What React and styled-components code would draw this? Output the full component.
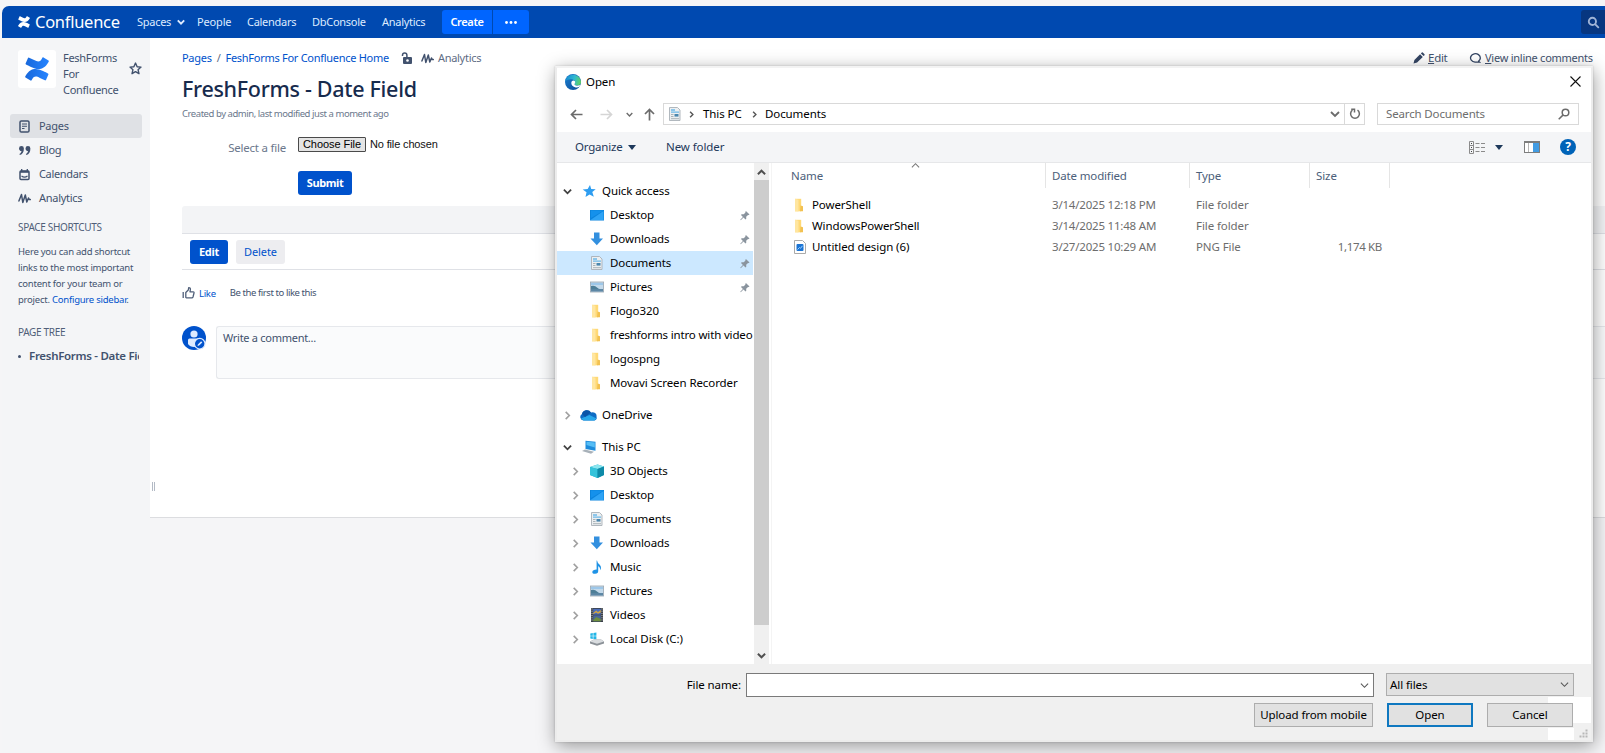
import React from "react";
import styled, { createGlobalStyle, css } from "styled-components";

const Global = createGlobalStyle`
  *, *::before, *::after { box-sizing: border-box; }
  html, body { margin: 0; padding: 0; background: #f5f5f5; overflow: hidden; }
  body { font-family: "Noto Sans", "Open Sans", sans-serif; font-size: 11px; letter-spacing: -0.28px; color: #42526e; }
  svg { display: block; flex: none; }
`;

/* ---------- shared ---------- */
const Text = styled.span`
  white-space: nowrap;
  flex: none;
  padding-bottom: ${(p) => (p.$flat ? 0 : 2)}px;
  ${(p) => p.$size && css`font-size: ${p.$size}px;`}
  ${(p) => p.$track !== undefined && css`letter-spacing: ${p.$track}px;`}
  font-weight: ${(p) => p.$weight || 400};
  ${(p) => p.$color && css`color: ${p.$color};`}
`;

const Page = styled.div`
  position: relative;
  width: 1605px;
  height: 753px;
  overflow: hidden;
  padding: 6px 0 0 2px;
  display: flex;
  flex-direction: column;
  background: #f5f5f7;
`;

/* ---------- header ---------- */
const Header = styled.header`
  height: 32px;
  flex: none;
  display: flex;
  align-items: center;
  padding-left: 16px;
  background: #0049b0;
  border-top-left-radius: 7px;
  color: #deebff;
`;
const Brand = styled.div`
  width: 119px;
  display: flex;
  align-items: center;
  gap: 5px;
  color: #fff;
`;
const NavItem = styled.a`
  width: ${(p) => p.$w}px;
  display: flex;
  align-items: center;
  gap: 6px;
`;
const CreateGroup = styled.div`
  display: flex;
  gap: 1px;
  height: 24px;
`;
const CreateButton = styled.button`
  border: 0;
  padding: 0;
  width: ${(p) => p.$w}px;
  display: flex;
  align-items: center;
  justify-content: center;
  background: #0065ff;
  color: #fff;
  font-family: inherit;
  border-radius: ${(p) => (p.$end ? "0 3px 3px 0" : "3px 0 0 3px")};
`;
const QuickSearch = styled.div`
  margin-left: auto;
  width: 24px;
  height: 24px;
  border-radius: 3px 0 0 3px;
  background: #073680;
  display: flex;
  align-items: center;
  padding-left: 6px;
`;

/* ---------- sidebar ---------- */
const Columns = styled.div`
  display: flex;
  flex: 1;
`;
const Sidebar = styled.aside`
  width: 148px;
  flex: none;
  background: #f4f5f7;
  padding: 12px 8px 0 8px;
`;
const SpaceHead = styled.div`
  height: 64px;
  display: flex;
  padding-left: 8px;
`;
const SpaceLogo = styled.div`
  width: 38px;
  height: 38px;
  flex: none;
  background: #fff;
  border-radius: 3px;
  display: grid;
  place-items: center;
`;
const SpaceName = styled.div`
  width: 73px;
  flex: none;
  padding-left: 7px;
  line-height: 16px;
`;
const StarSlot = styled.div`
  padding-top: 12px;
`;
const SideLink = styled.a`
  height: 24px;
  width: 132px;
  display: flex;
  align-items: center;
  padding-left: 8px;
  gap: 8px;
  border-radius: 3px;
  background: ${(p) => (p.$active ? "#dfe1e5" : "transparent")};
`;
const SideTitle = styled.h2`
  margin: ${(p) => p.$top}px 0 0 8px;
  height: 16px;
  line-height: 16px;
  font-weight: 400;
  color: #505f79;
  font-size: 10px;
`;
const SideHelp = styled.p`
  margin: 9px 0 0 8px;
  line-height: 16px;
  font-size: 9.5px;
  letter-spacing: -0.24px;
  a { color: #0052cc; }
`;
const TreeEntry = styled.div`
  margin: 8px 0 0 8px;
  width: 121px;
  height: 16px;
  overflow: hidden;
  display: flex;
  align-items: center;
  gap: 8px;
  &::before {
    content: "";
    width: 3px;
    height: 3px;
    border-radius: 50%;
    background: #42526e;
    flex: none;
  }
`;

/* ---------- content ---------- */
const Content = styled.main`
  flex: 1;
  height: 480px;
  background: #fff;
  border-bottom: 1px solid #dcdde0;
  display: flex;
`;
const Splitter = styled.div`
  width: 32px;
  padding: 444px 0 0 2px;
  display: flex;
  gap: 1px;
  &::before, &::after {
    content: "";
    width: 1px;
    height: 9px;
    background: #b3bac5;
  }
`;
const Article = styled.article`
  flex: 1;
  padding-top: 12px;
`;
const CrumbBar = styled.div`
  height: 16px;
  display: flex;
  align-items: center;
`;
const Crumbs = styled.nav`
  width: 1231px;
  display: flex;
  align-items: center;
  gap: 5px;
  color: #5e6c84;
  a { color: #0052cc; }
`;
const CrumbTools = styled.span`
  display: flex;
  align-items: center;
  gap: 4px;
  margin-left: ${(p) => p.$ml}px;
`;
const Action = styled.a`
  display: flex;
  align-items: center;
  gap: ${(p) => p.$gap || 3}px;
  width: ${(p) => p.$w}px;
  u { text-underline-offset: 1px; }
`;
const Title = styled.h1`
  margin: 6px 0 0;
  height: 32px;
  line-height: 32px;
  font-weight: 500;
  color: #172b4d;
`;
const Byline = styled.div`
  height: 16px;
  line-height: 16px;
  margin-top: 1px;
  color: #6b778c;
`;
const FieldRow = styled.div`
  display: flex;
  height: 16px;
  margin-top: 15px;
`;
const FieldLabel = styled.label`
  width: 116px;
  padding: 4px 12px 0 0;
  text-align: right;
  color: #6b778c;
`;
const FilePicker = styled.div`
  display: flex;
  align-items: center;
  gap: 4px;
  font-family: "Liberation Sans", Arial, sans-serif;
  color: #111;
`;
const ChooseFile = styled.button`
  width: 68px;
  height: 15px;
  padding: 0;
  line-height: 12px;
  font-family: inherit;
  background: #e4e4e4;
  border: 1px solid #4a4a4a;
  border-radius: 1px;
  color: #000;
`;
const Button = styled.button`
  height: 24px;
  width: ${(p) => p.$w}px;
  padding: 0;
  border: 0;
  border-radius: 3px;
  font: inherit;
  letter-spacing: inherit;
  display: flex;
  align-items: center;
  justify-content: center;
  ${(p) =>
    p.$primary
      ? css`background: #0052cc; color: #fff;`
      : css`background: #ededf0; color: #0052cc;`}
`;
const SubmitRow = styled.div`
  padding: 19px 0 11px 116px;
  display: flex;
`;
const Band = styled.div`
  height: 28px;
  background: #f3f4f6;
  border-bottom: 1px solid #dfe1e6;
  border-radius: 3px 0 0 0;
`;
const ButtonRow = styled.div`
  height: 36px;
  padding: 6px 8px 0;
  display: flex;
  gap: 8px;
  border-bottom: 1px solid #dfe1e6;
`;
const LikeRow = styled.div`
  margin-top: 14px;
  height: 17px;
  padding-top: 1px;
  display: flex;
  align-items: center;
  gap: 4px;
`;
const LikeCount = styled.span`
  padding-left: 10px;
  display: flex;
`;
const CommentRow = styled.div`
  margin-top: 25px;
  display: flex;
  gap: 10px;
`;
const CommentBox = styled.div`
  flex: 1;
  height: 53px;
  border: 1px solid #e6e8ec;
  border-right: 0;
  border-radius: 3px 0 0 3px;
  background: #fafbfc;
  padding: 3px 6px;
`;

/* ---------- file dialog ---------- */
const Dialog = styled.section`
  position: absolute;
  left: 555px;
  top: 66px;
  width: 1038px;
  height: 676px;
  border: 2px solid #ececec;
  border-top-color: #f3f3f3;
  background: #fff;
  box-shadow: 0 0 2px rgba(0, 0, 0, 0.18), 1px 4px 17px rgba(0, 0, 0, 0.38);
  color: #000;
  font-size: 11.5px;
  letter-spacing: -0.09px;
  display: flex;
  flex-direction: column;
`;
const TitleBar = styled.div`
  height: 29px;
  display: flex;
  align-items: center;
  padding: 0 10px 2px 8px;
  gap: 5px;
  flex: none;
  svg:last-child { margin-left: auto; }
`;
const NavBar = styled.div`
  height: 35px;
  flex: none;
  display: flex;
  padding: 6px 12px 0 13px;
`;
const NavArrows = styled.div`
  width: 93px;
  height: 22px;
  display: flex;
  align-items: center;
`;
const ArrowSlot = styled.span`
  width: ${(p) => p.$w}px;
`;
const AddressBar = styled.div`
  width: 702px;
  height: 22px;
  border: 1px solid #d9d9d9;
  display: flex;
  align-items: center;
  padding-left: 4px;
`;
const Crumb = styled.span`
  display: flex;
  align-items: center;
  width: ${(p) => p.$w}px;
`;
const Refresh = styled.span`
  width: 20px;
  height: 20px;
  border-left: 1px solid #d9d9d9;
  display: grid;
  place-items: center;
`;
const DropSlot = styled.span`
  margin-left: auto;
  padding-right: 4px;
`;
const SearchBox = styled.div`
  margin-left: 12px;
  width: 202px;
  height: 22px;
  border: 1px solid #d9d9d9;
  display: flex;
  align-items: center;
  justify-content: space-between;
  padding: 0 8px;
  color: #6d6d6d;
`;
const ToolBar = styled.div`
  height: 31px;
  flex: none;
  background: #f4f5f7;
  border-bottom: 1px solid #e6e7e9;
  color: #1e395b;
  display: flex;
  align-items: center;
  padding: 0 15px 0 18px;
`;
const ToolItem = styled.div`
  width: ${(p) => p.$w}px;
  display: flex;
  align-items: center;
  gap: 5px;
`;
const ToolIcons = styled.div`
  margin-left: auto;
  display: flex;
  align-items: center;
`;
const IconGap = styled.span`
  width: ${(p) => p.$w}px;
`;
const Body = styled.div`
  height: 501px;
  flex: none;
  display: flex;
`;
const Tree = styled.div`
  width: 197px;
  flex: none;
  padding-top: 16px;
  overflow: hidden;
`;
const TreeRow = styled.div`
  height: 24px;
  width: 196px;
  margin-top: ${(p) => p.$gap || 0}px;
  padding-left: ${(p) => (p.$child ? 14 : 6)}px;
  display: flex;
  align-items: center;
  overflow: hidden;
  background: ${(p) => (p.$selected ? "#cce8ff" : "transparent")};
`;
const ChevSlot = styled.span`
  width: ${(p) => (p.$child ? 19 : 17)}px;
  flex: none;
`;
const IconSlot = styled.span`
  width: ${(p) => (p.$child ? 20 : 22)}px;
  padding-bottom: 1px;
  flex: none;
`;
const PinSlot = styled.span`
  margin-left: auto;
  padding-right: 3px;
`;
const ScrollBar = styled.div`
  width: 15px;
  height: 501px;
  background: #f0f0f0;
  display: flex;
  flex-direction: column;
  align-items: center;
  padding: 5px 0 4px;
`;
const Thumb = styled.div`
  width: 15px;
  height: 445px;
  background: #cdcdcd;
  margin: 3px 0 auto;
`;
const List = styled.div`
  flex: 1;
  margin-left: 2px;
  border-left: 1px solid #f4f4f4;
  padding-left: 13px;
`;
const HeadRow = styled.div`
  display: flex;
  height: 25px;
  margin-bottom: 7px;
  color: #4c607a;
`;
const HeadCell = styled.div`
  width: ${(p) => p.$w}px;
  padding: 4px 0 0 6px;
  line-height: 17px;
  border-right: 1px solid #e5e5e5;
  display: flex;
`;
const SortMark = styled.span`
  margin: -6px auto 0 88px;
`;
const FileRow = styled.div`
  height: 21px;
  display: flex;
  align-items: center;
  color: #6d6d6d;
  svg { margin-bottom: 1px; }
`;
const Cell = styled.div`
  width: ${(p) => p.$w}px;
  padding-left: ${(p) => p.$pl || 6}px;
  padding-right: ${(p) => (p.$right ? 8 : 0)}px;
  display: flex;
  align-items: center;
  justify-content: ${(p) => (p.$right ? "flex-end" : "flex-start")};
  gap: 5px;
`;
const Footer = styled.div`
  flex: 1;
  background: #f0f0f0;
  padding-top: 9px;
  display: flex;
  flex-direction: column;
`;
const FooterRow = styled.div`
  display: flex;
  flex: none;
  align-items: center;
  justify-content: flex-end;
  padding-right: ${(p) => p.$right}px;
  height: ${(p) => p.$h}px;
`;
const NameLabel = styled.label`
  display: flex;
  margin-right: 5px;
`;
const Combo = styled.div`
  width: ${(p) => p.$w}px;
  height: ${(p) => p.$h}px;
  border: 1px solid ${(p) => (p.$grey ? "#adadad" : "#7a7a7a")};
  background: ${(p) => (p.$grey ? "#e1e1e1" : "#fff")};
  display: flex;
  align-items: center;
  justify-content: space-between;
  padding: 0 4px 0 3px;
  align-self: flex-start;
`;
const WinButton = styled.button`
  width: ${(p) => p.$w}px;
  height: 24px;
  flex: none;
  margin-left: ${(p) => p.$ml || 0}px;
  padding: 0;
  display: flex;
  align-items: center;
  justify-content: center;
  background: #e1e1e1;
  border: ${(p) => (p.$default ? "2px solid #0f78c0" : "1px solid #adadad")};
  font: inherit;
  letter-spacing: inherit;
  color: #000;
`;
const ButtonBand = styled.div`
  flex: none;
  height: 26px;
  display: flex;
  justify-content: flex-end;
  align-items: flex-start;
  padding: 6px 18px 0 0;
  background: linear-gradient(#fff, #fff) right / 43px 100% no-repeat;
`;
const GripBand = styled.div`
  flex: 1;
  display: flex;
  justify-content: flex-end;
  align-items: flex-end;
  padding: 0 3px 2px 0;
  background: linear-gradient(#fff, #fff) right 17px bottom / 26px 12px no-repeat;
`;

/* ---------- icons ---------- */
const Chevron = ({ dir = "down", size = 9, color = "#444", w = 1.6 }) => {
  const d = {
    down: "M1 3l4 4 4-4",
    up: "M1 7l4-4 4 4",
    right: "M3 1l4 4-4 4",
  }[dir];
  return (
    <svg width={size} height={size} viewBox="0 0 10 10" fill="none" stroke={color} strokeWidth={w}>
      <path d={d} />
    </svg>
  );
};
const Triangle = () => (
  <svg width="8" height="5" viewBox="0 0 8 5"><path d="M0 0h8L4 5z" fill="#1e395b" /></svg>
);
const ConfluenceMark = ({ size, a = "#fff", b = "#fff" }) => (
  <svg width={size} height={size} viewBox="0 0 24 24">
    <defs>
      <linearGradient id={"cf" + size} x1="0" x2="1">
        <stop offset="0" stopColor={a} /><stop offset="1" stopColor={b} />
      </linearGradient>
    </defs>
    <g fill={`url(#cf${size})`}>
      <path d="M.9 18.3c-.3.4-.5.9-.7 1.2-.2.4-.1.8.3 1l5 3.1c.4.2.9.1 1.100-.3.2-.3.4-.8.7-1.200 2-3.300 4-2.900 7.600-1.200l5 2.400c.4.2.9 0 1.100-.4l2.400-5.400c.2-.4 0-.9-.4-1.100-1-.5-3.100-1.500-5-2.400C11.200 10.700 5.400 10.900.9 18.300z" />
      <path d="M23.100 5.700c.3-.4.5-.9.7-1.200.2-.4.1-.8-.3-1l-5-3.100c-.4-.2-.9-.1-1.100.3-.2.3-.4.8-.7 1.200-2 3.300-4 2.900-7.600 1.200L4.100.700c-.4-.2-.9 0-1.100.4L.6 6.500c-.2.4 0 .9.4 1.100 1 .5 3.100 1.500 5 2.400 6.800 3.300 12.600 3.100 17.100-4.300z" />
    </g>
  </svg>
);
const Wave = ({ color = "#42526e", size = 13 }) => (
  <svg width={size} height={size} viewBox="0 0 13 13" fill="none" stroke={color} strokeWidth="1.5" strokeLinejoin="round" strokeLinecap="round">
    <path d="M.9 9L3.500 2.500l1.300 8L7.300 3l1.500 7 1.700-4 .8 1.600h1" />
  </svg>
);
const PagesIcon = () => (
  <svg width="13" height="13" viewBox="0 0 13 13" fill="none" stroke="#42526e">
    <rect x="2" y="1" width="9" height="11" rx="1.300" strokeWidth="1.500" />
    <path d="M4 4h5M4 6.300h5M4 8.500h2.500" strokeWidth="1.100" />
  </svg>
);
const QuoteIcon = () => (
  <svg width="13" height="13" viewBox="0 0 13 13" fill="#42526e">
    <path d="M1 4.500a2.400 2.400 0 1 1 4.900 0C5.900 8 4.500 10.300 1.900 11l-.5-1c1.200-.6 1.900-1.500 2.100-2.900C2 7.100 1 5.900 1 4.500zM7.500 4.500a2.400 2.400 0 1 1 4.900 0c0 3.500-1.400 5.800-4 6.500l-.5-1c1.200-.6 1.900-1.500 2.100-2.900-1.500 0-2.500-1.200-2.500-2.600z" />
  </svg>
);
const CalIcon = () => (
  <svg width="13" height="13" viewBox="0 0 13 13" fill="none" stroke="#42526e">
    <rect x="2" y="3" width="9" height="8.500" rx="1" strokeWidth="1.500" />
    <path d="M2 3.800h9" strokeWidth="2" /><path d="M3.700 1v2M9.300 1v2" strokeWidth="1.300" /><path d="M3.500 8q3 2.400 6 0" strokeWidth="1.200" />
  </svg>
);
const StarIcon = () => (
  <svg width="13" height="13" viewBox="0 0 24 24" fill="none" stroke="#42526e" strokeWidth="2.600" strokeLinejoin="round">
    <path d="M12 2l3 6.700 7.200.7-5.500 4.800 1.700 7.300L12 17.700l-6.400 3.800 1.700-7.300L1.800 9.400 9 8.700z" />
  </svg>
);
const LockIcon = () => (
  <svg width="12" height="13" viewBox="0 0 12 13">
    <path d="M1.500 4V3.200a2.200 2.200 0 0 1 4.400 0V6" fill="none" stroke="#42526e" strokeWidth="1.500" />
    <rect x="2" y="5" width="9" height="7" rx="1" fill="#42526e" /><circle cx="6.500" cy="8.500" r="1.300" fill="#fff" />
  </svg>
);
const PencilIcon = () => (
  <svg width="12" height="12" viewBox="0 0 12 12" fill="#344563">
    <path d="M.5 11.500l.9-3.600 5.700-5.700 2.700 2.700-5.700 5.700zM7.900 1.400l.9-.9q.5-.4 1 0l1.700 1.700q.4.500 0 1l-.9.900z" />
  </svg>
);
const BubbleIcon = () => (
  <svg width="12" height="13" viewBox="0 0 13 13" fill="none" stroke="#344563" strokeWidth="1.400">
    <path d="M10 9.700A5.300 4.600 0 1 0 6.500 10.500H11.500L10 9.200" />
  </svg>
);
const SearchIcon = () => (
  <svg width="13" height="13" viewBox="0 0 13 13" fill="none" stroke="#9fb3d6" strokeWidth="1.900" strokeLinecap="round">
    <circle cx="5.400" cy="5.400" r="3.600" /><path d="M8.300 8.300l3 3" />
  </svg>
);
const ThumbIcon = () => (
  <svg width="13" height="13" viewBox="0 0 13 13" fill="none" stroke="#505f79" strokeWidth="1.300" strokeLinejoin="round">
    <path d="M1.200 5v6M3.800 10.500V5.500l2.500-2.500.4-2.300q1.700-.2 1.700 1.600L8 4.800h3.200q1 .2.800 1.200l-1 4q-.3.900-1.200.9H4.600z" />
  </svg>
);
const Avatar = () => (
  <svg width="24" height="24" viewBox="0 0 24 24">
    <circle cx="12" cy="12" r="12" fill="#0052cc" />
    <circle cx="12" cy="8" r="3.600" fill="#deebff" />
    <path d="M6 14q0-1.500 1.500-1.500h9q1.500 0 1.500 1.500v4q-2 3-6 3t-6-3z" fill="#deebff" />
    <circle cx="17.700" cy="17.700" r="5.300" fill="#0052cc" stroke="#deebff" strokeWidth="1.200" />
    <path d="M15.500 20l.4-1.600 3.200-3.200 1.200 1.200-3.200 3.200z" fill="#deebff" />
  </svg>
);
const EdgeIcon = () => (
  <svg width="16" height="16" viewBox="0 0 16 16">
    <defs>
      <linearGradient id="edTop" x1="0" y1=".3" x2="1" y2=".5"><stop offset="0" stopColor="#1787cf" /><stop offset=".55" stopColor="#2fb8d2" /><stop offset="1" stopColor="#5fd364" /></linearGradient>
      <linearGradient id="edLow" x1="0" y1="0" x2="1" y2="1"><stop offset="0" stopColor="#1b7fd0" /><stop offset="1" stopColor="#0c4a96" /></linearGradient>
    </defs>
    <circle cx="8" cy="8" r="8" fill="url(#edLow)" />
    <path d="M.1 7.600A8 8 0 0 1 16 8c0 2.200-1.600 3.400-3.600 3.400-1.800 0-2.900-.7-2.900-1.200s.7-.7.700-1.900C10.200 6.500 8.500 5.200 6 5.200 3 5.200.6 6.600.1 7.600z" fill="url(#edTop)" />
    <path d="M6.300 8.800C6.500 7.400 7.400 6.600 8.400 6.600c1 0 1.800.8 1.800 1.700 0 1.200-.7 1.300-.7 1.900 0 .7 1.300 1.600 3.500 1.400 1 0 1.700-.2 2.300-.5q-.6 1.400-1.400 2-1.400.6-3.200.3C8 12.800 6 11 6.300 8.800z" fill="#fff" />
  </svg>
);
const CloseIcon = () => (
  <svg width="11" height="11" viewBox="0 0 11 11" stroke="#111" strokeWidth="1.100"><path d="M.5.5l10 10M10.500.5l-10 10" /></svg>
);
const Arrow = ({ dir, color }) => (
  <svg width="13" height="13" viewBox="0 0 13 13" fill="none" stroke={color} strokeWidth="1.700">
    <path d={{ left: "M12.500 6.500H1.500M6 2L1.500 6.500 6 11", right: "M.5 6.500h11M7 2l4.500 4.500L7 11", up: "M6.500 12.500V1.500M2 6l4.500-4.500L11 6" }[dir]} />
  </svg>
);
const RefreshIcon = () => (
  <svg width="12" height="12" viewBox="0 0 12 12" fill="none" stroke="#6b6b6b" strokeWidth="1.500">
    <path d="M8.500 2.200A4.400 4.400 0 1 1 3.500 2.200" /><path d="M2.200 1.200h3.300v3.300" />
  </svg>
);
const WinSearch = () => (
  <svg width="12" height="12" viewBox="0 0 12 12" fill="none" stroke="#6b6b6b" strokeWidth="1.500">
    <circle cx="7.500" cy="4.500" r="3.300" /><path d="M5.200 6.900L.7 11.300" />
  </svg>
);
const ViewIcon = () => (
  <svg width="16" height="13" viewBox="0 0 16 13" fill="none" stroke="#8b8b8b">
    <path d="M.5.500h4v12h-4zM.5 4.500h4M.5 8.500h4" />
    <path d="M6.500 2.500h4M12 2.500h4M6.500 6.500h4M12 6.500h4M6.500 10.500h4M12 10.500h4" />
    <path d="M2 2.500h1M2 6.500h1M2 10.500h1" stroke="#444" />
  </svg>
);
const PreviewIcon = () => (
  <svg width="16" height="12" viewBox="0 0 16 12">
    <rect x=".5" y=".5" width="15" height="11" fill="#fff" stroke="#7d7d7d" />
    <path d="M0 1h16" stroke="#7d7d7d" strokeWidth="2" />
    <path d="M4.500 2v9" stroke="#b5b5b5" /><rect x="9" y="2" width="6" height="9" fill="#429ce3" />
  </svg>
);
const HelpBadge = styled.span`
  width: 16px;
  height: 16px;
  border-radius: 50%;
  background: #0063b8;
  color: #fff;
  font-size: 12px;
  font-weight: 700;
  line-height: 16px;
  text-align: center;
`;
const PinIcon = () => (
  <svg width="10" height="11" viewBox="0 0 11 11" fill="#8a949e">
    <path d="M6.500.500L10.500 4.500 9.500 5l-1 .200-1.700 1.700.1 2.300-.9.700L3.900 7.800.800 10.700.300 10.200 3.200 7.100 1.100 5l.700-.9 2.300.1L5.800 2.500 6 1.500z" />
  </svg>
);
const Icon = ({ name }) => {
  const s = { width: 14, height: 14, viewBox: "0 0 14 14" };
  switch (name) {
    case "star":
      return <svg width="16" height="14" viewBox="-3 0 16 14"><path d="M7 1l1.200 4 4.500.2-3.400 2.900 1.500 4.700L6.600 10.400 2.500 13l1-4.700L-.3 5.500l5-.4z" fill="#2e9df0" /></svg>;
    case "desktop":
      return <svg {...s}><rect y="2" width="14" height="10.500" fill="#0b84dd" /><path d="M.5 12L13.500 3v9z" fill="#2ea3f5" /><path d="M1 2.500h12.500L1 10z" fill="#1491ec" /></svg>;
    case "down":
      return <svg {...s}><path d="M4 .5h5.500v6H13L6.800 13.300.500 6.500H4z" fill="#3390df" /></svg>;
    case "doc":
      return <svg {...s}><path d="M1.500.5h8l2.500 2.500v10.500h-10.500z" fill="#eceff1" stroke="#a9b0b7" strokeWidth=".9" /><path d="M3 3h4M3 5.200h8" stroke="#6db9e8" strokeWidth="1.300" /><rect x="6.500" y="7" width="4" height="2.600" fill="#4a86ad" /><path d="M3 7.500h2.500M3 9.500h2.500M3 11.700h8" stroke="#a3abb1" strokeWidth=".9" /></svg>;
    case "pic":
      return <svg {...s}><rect x=".4" y="2" width="13.200" height="10" fill="#c3d9ea" stroke="#9aa6b0" strokeWidth=".8" /><path d="M1 6q4-1 6 1.500t6 1.500v1H1z" fill="#4d7e97" /><path d="M1 9.200h12v2.300H1z" fill="#5d87a5" /><path d="M1 3h12v2H1z" fill="#8dbfe8" opacity=".7" /></svg>;
    case "folder":
      return <svg {...s}><path d="M2 .8h6.200v12.500H2z" fill="#ffd976" /><path d="M2 .8l3.500 1v11.700L2 13.200z" fill="#ffe6a0" /><path d="M7.500 7.500l2.500.7v5H7z" fill="#f2c151" /></svg>;
    case "cloud":
      return <svg width="17" height="12" viewBox="0 0 17 12"><path d="M3.500 11.500A3.500 3.500 0 0 1 2 5a5 5 0 0 1 9-1.500A4 4 0 0 1 16.500 8a2.500 2.500 0 0 1-2 3.500z" fill="#0f6cc4" /><path d="M3.500 11.500L1 9.500 9.500 6l7 3.500-2 2z" fill="#29a8ea" /><path d="M2 5a5 5 0 0 1 9-1.500L5 8z" fill="#0a55a8" /></svg>;
    case "pc":
      return <svg width="17" height="14" viewBox="-1.500 0 17 14"><path d="M4 .800l10 1v9l-10-1.800z" fill="#1d8bdb" /><path d="M5 1.700l8.300.8v5l-8.300-2.500z" fill="#55bdf5" /><path d="M.5 11l3-1.500 9 2.200-3 2z" fill="#a8b1b9" /></svg>;
    case "cube":
      return <svg {...s}><path d="M0 3l7.500-2.500L14 2.500v8.500l-6.500 3L0 11z" fill="#1ba9c4" /><path d="M0 3l7.500-2.500L14 2.500 7.500 5z" fill="#8ce6f0" /><path d="M0 3L7.500 5v9L0 11z" fill="#35c3da" /><path d="M7.500 5L14 2.500v8.500l-6.500 3z" fill="#0e8aa8" /></svg>;
    case "music":
      return <svg {...s}><path d="M7 .5q.5 2.800 2.700 4.200Q12 6.800 10.200 10.300 10.500 7.300 8.200 6v5q0 2.600-3 2.800-3 0-2.900-1.900Q2.800 9.700 6.600 9.600V.5z" fill="#1f93e6" /></svg>;
    case "video":
      return <svg {...s}><rect x="1" width="12" height="14" fill="#3a3f46" /><rect x="3.200" y=".8" width="7.600" height="5.800" fill="#4b6dbb" /><rect x="3.200" y="7.300" width="7.600" height="6" fill="#49669a" /><path d="M3.200 5l3-2.500L8 4l2.800-2v2.600L8 5.800 6 4.600 3.200 6.200z" fill="#d2a53f" /><path d="M3.200 12l3-3 4.600 2v2.300H3.200z" fill="#6f8f3f" /><path d="M2 .5v13M12 .5v13" stroke="#c9ccd0" strokeDasharray="1 1.200" /></svg>;
    case "disk":
      return <svg {...s}><path d="M.3 1.500l2.500-.4v2.600H.3zM3.400 1l3-.5v3.200h-3zM.3 4.300h2.500v2.600l-2.500-.4zM3.400 4.300h3v3.200l-3-.5z" fill="#22b5e6" /><path d="M0 9.500l4-2h7l3 2v2l-7 2.300L0 11.500z" fill="#8c9298" /><path d="M0 9.500l4-2h7l3 2-7 2.200z" fill="#d9dcdf" /></svg>;
    default:
      return <svg {...s}><path d="M1.500.500h8L12.500 3.500v10h-11z" fill="#fff" stroke="#a0a0a0" strokeWidth=".9" /><rect x="3.500" y="4" width="7" height="7" rx="1" fill="#1b74d4" /><path d="M4.500 9.500l2-2 1 .8 2-2.500" stroke="#9fd3ff" fill="none" /></svg>;
  }
};
const Grip = () => (
  <svg width="9" height="9" viewBox="0 0 9 9" fill="#b8b8b8">
    <path d="M6.500.500h2v2h-2zM6.500 3.500h2v2h-2zM6.500 6.500h2v2h-2zM3.500 3.500h2v2h-2zM3.500 6.500h2v2h-2zM.5 6.500h2v2h-2z" />
  </svg>
);

/* ---------- data ---------- */
const tree = [
  { t: "Quick access", i: "star", open: true },
  { t: "Desktop", i: "desktop", child: true, pin: true },
  { t: "Downloads", i: "down", child: true, pin: true },
  { t: "Documents", i: "doc", child: true, pin: true, sel: true },
  { t: "Pictures", i: "pic", child: true, pin: true },
  { t: "Flogo320", i: "folder", child: true },
  { t: "freshforms intro with video", i: "folder", child: true, track: -0.16 },
  { t: "logospng", i: "folder", child: true },
  { t: "Movavi Screen Recorder", i: "folder", child: true },
  { t: "OneDrive", i: "cloud", gap: 8, closed: true },
  { t: "This PC", i: "pc", gap: 8, open: true },
  { t: "3D Objects", i: "cube", child: true, closed: true },
  { t: "Desktop", i: "desktop", child: true, closed: true },
  { t: "Documents", i: "doc", child: true, closed: true },
  { t: "Downloads", i: "down", child: true, closed: true },
  { t: "Music", i: "music", child: true, closed: true },
  { t: "Pictures", i: "pic", child: true, closed: true },
  { t: "Videos", i: "video", child: true, closed: true },
  { t: "Local Disk (C:)", i: "disk", child: true, closed: true },
];
const files = [
  { n: "PowerShell", i: "folder", d: "3/14/2025 12:18 PM", k: "File folder", s: "" },
  { n: "WindowsPowerShell", i: "folder", d: "3/14/2025 11:48 AM", k: "File folder", s: "" },
  { n: "Untitled design (6)", i: "png", d: "3/27/2025 10:29 AM", k: "PNG File", s: "1,174 KB" },
];

function OpenDialog() {
  return (
    <Dialog>
      <TitleBar>
        <EdgeIcon />
        <Text $flat>Open</Text>
        <CloseIcon />
      </TitleBar>
      <NavBar>
        <NavArrows>
          <ArrowSlot $w={30}><Arrow dir="left" color="#6b6b6b" /></ArrowSlot>
          <ArrowSlot $w={26}><Arrow dir="right" color="#d5d5d5" /></ArrowSlot>
          <ArrowSlot $w={17}><Chevron size={7} color="#6b6b6b" w={2} /></ArrowSlot>
          <Arrow dir="up" color="#6b6b6b" />
        </NavArrows>
        <AddressBar>
          <Crumb $w={20}><Icon name="doc" /></Crumb>
          <Crumb $w={15}><Chevron dir="right" size={7} color="#555" w={2} /></Crumb>
          <Crumb $w={48}><Text>This PC</Text></Crumb>
          <Crumb $w={14}><Chevron dir="right" size={7} color="#555" w={2} /></Crumb>
          <Text>Documents</Text>
          <DropSlot><Chevron size={10} color="#6b6b6b" w={1.8} /></DropSlot>
          <Refresh><RefreshIcon /></Refresh>
        </AddressBar>
        <SearchBox>
          <Text $track={-0.15}>Search Documents</Text>
          <WinSearch />
        </SearchBox>
      </NavBar>
      <ToolBar>
        <ToolItem $w={91}><Text $track={-0.2}>Organize</Text><Triangle /></ToolItem>
        <ToolItem $w={80}><Text>New folder</Text></ToolItem>
        <ToolIcons>
          <ViewIcon />
          <IconGap $w={10} />
          <Triangle />
          <IconGap $w={21} />
          <PreviewIcon />
          <IconGap $w={20} />
          <HelpBadge>?</HelpBadge>
        </ToolIcons>
      </ToolBar>
      <Body>
        <Tree>
          {tree.map((r, i) => (
            <TreeRow key={i} $child={r.child} $gap={r.gap} $selected={r.sel}>
              <ChevSlot $child={r.child}>
                {r.open && <Chevron size={9} color="#404040" w={2} />}
                {r.closed && <Chevron dir="right" size={9} color="#a0a0a0" w={1.8} />}
              </ChevSlot>
              <IconSlot $child={r.child}><Icon name={r.i} /></IconSlot>
              <Text $track={r.track}>{r.t}</Text>
              {r.pin && <PinSlot><PinIcon /></PinSlot>}
            </TreeRow>
          ))}
        </Tree>
        <ScrollBar>
          <Chevron dir="up" size={9} color="#505050" w={2.2} />
          <Thumb />
          <Chevron size={9} color="#505050" w={2.2} />
        </ScrollBar>
        <List>
          <HeadRow>
            <HeadCell $w={261}><Text>Name</Text><SortMark><Chevron dir="up" size={9} color="#777" w={1.2} /></SortMark></HeadCell>
            <HeadCell $w={144}><Text $track={-0.15}>Date modified</Text></HeadCell>
            <HeadCell $w={120}><Text>Type</Text></HeadCell>
            <HeadCell $w={80}><Text>Size</Text></HeadCell>
          </HeadRow>
          {files.map((f) => (
            <FileRow key={f.n}>
              <Cell $w={261} $pl={8}><Icon name={f.i} /><Text $color="#000">{f.n}</Text></Cell>
              <Cell $w={144}><Text $track={-0.2}>{f.d}</Text></Cell>
              <Cell $w={120}><Text>{f.k}</Text></Cell>
              <Cell $w={80} $right><Text $track={-0.35}>{f.s}</Text></Cell>
            </FileRow>
          ))}
        </List>
      </Body>
      <Footer>
        <FooterRow $right={17} $h={24}>
          <NameLabel><Text>File name:</Text></NameLabel>
          <Combo $w={628} $h={24}><span /><Chevron size={9} color="#555" w={1.2} /></Combo>
          <IconGap $w={12} />
          <Combo $w={188} $h={23} $grey><Text $flat>All files</Text><Chevron size={9} color="#555" w={1.2} /></Combo>
        </FooterRow>
        <ButtonBand>
          <WinButton $w={119}><Text>Upload from mobile</Text></WinButton>
          <WinButton $w={86} $ml={14} $default><Text>Open</Text></WinButton>
          <WinButton $w={86} $ml={14}><Text>Cancel</Text></WinButton>
        </ButtonBand>
        <GripBand><Grip /></GripBand>
      </Footer>
    </Dialog>
  );
}

export default function App() {
  return (
    <>
      <Global />
      <Page>
        <Header>
          <Brand><ConfluenceMark size={12} /><Text $size={16.5} $track={-0.27}>Confluence</Text></Brand>
          <NavItem $w={60}><Text>Spaces</Text><Chevron size={8} color="#deebff" w={2.4} /></NavItem>
          <NavItem $w={50}><Text $track={-0.15}>People</Text></NavItem>
          <NavItem $w={65}><Text>Calendars</Text></NavItem>
          <NavItem $w={70}><Text>DbConsole</Text></NavItem>
          <NavItem $w={60}><Text>Analytics</Text></NavItem>
          <CreateGroup>
            <CreateButton $w={50}><Text $size={11} $track={-0.35} $weight={600}>Create</Text></CreateButton>
            <CreateButton $w={36} $end>
              <svg width="12" height="3" viewBox="0 0 12 3" fill="#fff"><circle cx="1.500" cy="1.500" r="1.400" /><circle cx="6" cy="1.500" r="1.400" /><circle cx="10.500" cy="1.500" r="1.400" /></svg>
            </CreateButton>
          </CreateGroup>
          <QuickSearch><SearchIcon /></QuickSearch>
        </Header>
        <Columns>
          <Sidebar>
            <SpaceHead>
              <SpaceLogo><ConfluenceMark size={24} a="#1868db" b="#2684ff" /></SpaceLogo>
              <SpaceName><Text>FeshForms</Text><br /><Text>For</Text><br /><Text>Confluence</Text></SpaceName>
              <StarSlot><StarIcon /></StarSlot>
            </SpaceHead>
            <SideLink $active><PagesIcon /><Text>Pages</Text></SideLink>
            <SideLink><QuoteIcon /><Text>Blog</Text></SideLink>
            <SideLink><CalIcon /><Text $track={-0.35}>Calendars</Text></SideLink>
            <SideLink><Wave /><Text>Analytics</Text></SideLink>
            <SideTitle $top={9}><Text $size={10} $track={-0.33}>SPACE SHORTCUTS</Text></SideTitle>
            <SideHelp>
              <Text>Here you can add shortcut</Text><br />
              <Text>links to the most important</Text><br />
              <Text>content for your team or</Text><br />
              <Text>project. <a>Configure sidebar</a>.</Text>
            </SideHelp>
            <SideTitle $top={16}><Text $size={10} $track={-0.33}>PAGE TREE</Text></SideTitle>
            <TreeEntry><Text $size={11.5} $track={-0.3} $weight={600}>FreshForms - Date Field</Text></TreeEntry>
          </Sidebar>
          <Content>
            <Splitter />
            <Article>
              <CrumbBar>
                <Crumbs>
                  <Text as="a">Pages</Text><Text>/</Text><Text as="a">FeshForms For Confluence Home</Text>
                  <CrumbTools $ml={7}><LockIcon /></CrumbTools>
                  <CrumbTools $ml={3}><Wave /><Text>Analytics</Text></CrumbTools>
                </Crumbs>
                <Action $w={56}><PencilIcon /><Text $size={11.5}><u>E</u>dit</Text></Action>
                <Action $w={130} $gap={4}><BubbleIcon /><Text $track={-0.25}><u>V</u>iew inline comments</Text></Action>
              </CrumbBar>
              <Title><Text $size={21.5} $track={-0.3} $weight={500}>FreshForms - Date Field</Text></Title>
              <Byline><Text $size={9.5} $track={-0.45}>Created by admin, last modified just a moment ago</Text></Byline>
              <FieldRow>
                <FieldLabel><Text $size={11.5} $track={-0.22}>Select a file</Text></FieldLabel>
                <FilePicker>
                  <ChooseFile><Text $size={11} $track={-0.05}>Choose File</Text></ChooseFile>
                  <Text $size={11} $track={-0.15} $flat>No file chosen</Text>
                </FilePicker>
              </FieldRow>
              <SubmitRow><Button $w={54} $primary><Text $track={-0.4} $weight={700}>Submit</Text></Button></SubmitRow>
              <Band />
              <ButtonRow>
                <Button $w={38} $primary><Text $track={-0.3} $weight={700}>Edit</Text></Button>
                <Button $w={49}><Text $track={-0.1}>Delete</Text></Button>
              </ButtonRow>
              <LikeRow>
                <ThumbIcon /><Text $size={9.5} $color="#0052cc" $flat>Like</Text>
                <LikeCount><Text $size={9.5} $track={-0.42}>Be the first to like this</Text></LikeCount>
              </LikeRow>
              <CommentRow>
                <Avatar />
                <CommentBox><Text>Write a comment...</Text></CommentBox>
              </CommentRow>
            </Article>
          </Content>
        </Columns>
        <OpenDialog />
      </Page>
    </>
  );
}
